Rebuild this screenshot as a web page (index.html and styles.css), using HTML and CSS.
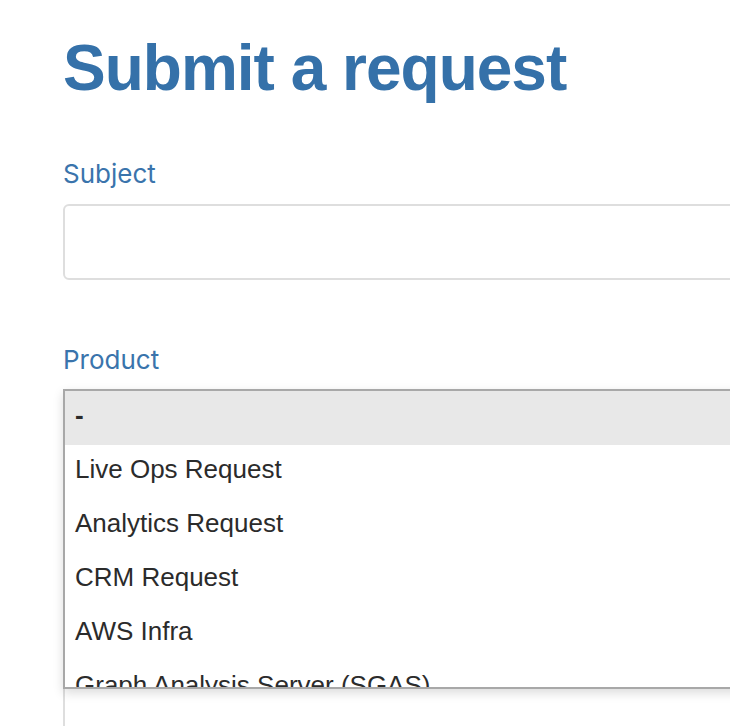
FILE: index.html
```html
<!DOCTYPE html>
<html lang="en">
  <head>
    <meta charset="UTF-8" />
    <meta name="viewport" content="width=device-width, initial-scale=1.0" />
    <title>Submit a request</title>
    <link rel="stylesheet" href="styles.css">
  </head>
  <body>
    <div class="container">
      <h1 class="title">Submit a request</h1>

      <!-- Subject -->
      <div class="field">
        <label class="label">Subject</label>
        <div class="input"></div>
      </div>

      <!-- Product, with its list open -->
      <div class="field product">
        <label class="label">Product</label>
        <div class="select-wrap">
          <div class="input"></div>
          <ul class="dropdown">
            <li class="option selected">-</li>
            <li class="option">Live Ops Request</li>
            <li class="option">Analytics Request</li>
            <li class="option">CRM Request</li>
            <li class="option">AWS Infra</li>
            <li class="option">Graph Analysis Server (SGAS)</li>
          </ul>
        </div>
      </div>

      <!-- Description (mostly under the open list) -->
      <div class="field">
        <label class="label">Description</label>
        <div class="input textarea"></div>
      </div>
    </div>
  </body>
</html>
```

FILE: styles.css
```css
body {
  margin: 0;
  overflow: hidden;
  background-color: #fff;
}
.container {
  width: 820px;
  padding: 32px 0 0 63px;
}
.title {
  margin: 0 0 55px 0;
  font-family: "Liberation Sans", Arial, sans-serif;
  font-size: 64px;
  letter-spacing: -1px;
  line-height: 72px;
  font-weight: bold;
  color: #3571a9;
}
.field {
  margin-bottom: 65px;
}
.label {
  display: block;
  margin-bottom: 15px;
  font-family: Inter, "Noto Sans", sans-serif;
  font-size: 26px;
  line-height: 30px;
  color: #3a74ac;
}
.input {
  height: 72px;
  border: 2px solid #dedede;
  border-radius: 6px;
  background-color: #fff;
}
.textarea {
  height: 220px;
}
.product .label {
  margin-bottom: 14px;
}
.select-wrap {
  position: relative;
}
.dropdown {
  position: absolute;
  top: 0;
  left: 0;
  right: 0;
  height: 296px;
  margin: 0;
  padding: 0;
  list-style: none;
  overflow: hidden;
  border: 2px solid #a8a8a8;
  background-color: #fff;
  box-shadow: 0 4px 10px rgba(0, 0, 0, 0.14);
  z-index: 2;
}
.option {
  height: 30px;
  padding: 9px 12px 15px 10px;
  font-family: "Liberation Sans", Arial, sans-serif;
  font-size: 26px;
  line-height: 30px;
  color: #2b2b2b;
  white-space: nowrap;
}
.option.selected {
  background-color: #e8e8e8;
  font-weight: bold;
}
```
